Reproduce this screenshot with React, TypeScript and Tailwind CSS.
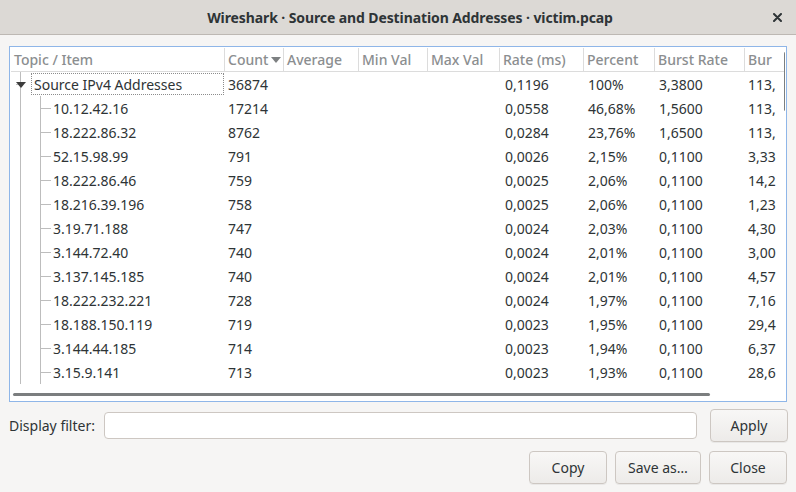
import React from "react";

const cols = [214, 59, 75, 69, 72, 84, 71, 90];
const headers = ["Topic / Item", "Count", "Average", "Min Val", "Max Val", "Rate (ms)", "Percent", "Burst Rate"];

const rows: string[][] = [
  ["Source IPv4 Addresses", "36874", "0,1196", "100%", "3,3800", "113,"],
  ["10.12.42.16", "17214", "0,0558", "46,68%", "1,5600", "113,"],
  ["18.222.86.32", "8762", "0,0284", "23,76%", "1,6500", "113,"],
  ["52.15.98.99", "791", "0,0026", "2,15%", "0,1100", "3,33"],
  ["18.222.86.46", "759", "0,0025", "2,06%", "0,1100", "14,2"],
  ["18.216.39.196", "758", "0,0025", "2,06%", "0,1100", "1,23"],
  ["3.19.71.188", "747", "0,0024", "2,03%", "0,1100", "4,30"],
  ["3.144.72.40", "740", "0,0024", "2,01%", "0,1100", "3,00"],
  ["3.137.145.185", "740", "0,0024", "2,01%", "0,1100", "4,57"],
  ["18.222.232.221", "728", "0,0024", "1,97%", "0,1100", "7,16"],
  ["18.188.150.119", "719", "0,0023", "1,95%", "0,1100", "29,4"],
  ["3.144.44.185", "714", "0,0023", "1,94%", "0,1100", "6,37"],
  ["3.15.9.141", "713", "0,0023", "1,93%", "0,1100", "28,6"],
];

function Btn({ label, w }: { label: string; w: string }) {
  return (
    <button
      className={`${w} h-[33px] rounded-[4px] border border-[#cdc7c2] bg-gradient-to-b from-[#f8f7f6] to-[#edebe9] text-[14px] text-[#2e3436] shadow-[0_1px_0_rgba(0,0,0,0.05)]`}
    >
      {label}
    </button>
  );
}

export default function App() {
  return (
    <div
      className="w-[796px] h-[492px] bg-[#f6f5f4] flex flex-col overflow-hidden text-[#2e3436]"
      style={{ fontFamily: '"Noto Sans", "DejaVu Sans", sans-serif' }}
    >
      {/* title bar */}
      <div className="h-[35px] shrink-0 bg-[#dcd9d5] border-b border-[#bdb8b3] flex items-center relative">
        <div className="flex-1 text-center font-bold text-[14px] tracking-[-0.1px] pl-[24px]">
          Wireshark · Source and Destination Addresses · victim.pcap
        </div>
        <div className="absolute right-[14px] top-[13px]">
          <svg width="9" height="9" viewBox="0 0 9 9">
            <path d="M1 1 L8 8 M8 1 L1 8" stroke="#2e3436" strokeWidth="2" strokeLinecap="round" />
          </svg>
        </div>
      </div>

      <div className="flex-1 flex flex-col px-[9px] pt-[11px]">
        {/* table frame */}
        <div className="h-[356px] border border-[#8fb6e8] p-[1px] bg-white">
          <div className="relative w-full h-full bg-white overflow-hidden text-[14px]">
            {/* header */}
            <div className="flex h-[24px] border-b border-[#dcdcdc] text-[#8b8e90] font-medium">
              {headers.map((h, i) => (
                <div
                  key={h}
                  style={{ width: cols[i] }}
                  className="shrink-0 flex items-center whitespace-nowrap overflow-hidden pl-[3px] border-r border-[#dcdcdc]"
                >
                  {h}
                  {i === 1 && (
                    <svg className="ml-[3px]" width="10" height="6" viewBox="0 0 10 6">
                      <path d="M0 0 L10 0 L5 6 Z" fill="#7d8082" />
                    </svg>
                  )}
                </div>
              ))}
              <div className="shrink-0 flex items-center pl-[3px] whitespace-nowrap">Bur</div>
            </div>
            {/* rows */}
            {rows.map((r, idx) => (
              <div key={idx} className="flex h-[24px] items-center text-[#2e3436]">
                <div style={{ width: cols[0] }} className="shrink-0 h-full relative">
                  <span className="absolute left-[9px] top-0 bottom-0 w-px bg-[#bdbdbd]" />
                  {idx === 0 ? (
                    <>
                      <span className="absolute left-[5px] top-[12px] w-[4px] h-px bg-[#bdbdbd]" />
                      <svg className="absolute left-[5px] top-[10px]" width="10" height="6" viewBox="0 0 10 6">
                        <path d="M0 0 L10 0 L5 6 Z" fill="#3c3c3c" />
                      </svg>
                      <div className="absolute left-[20px] right-[1px] top-[1px] bottom-[1px] border border-dotted border-[#8c8c8c] flex items-center pl-[2px] whitespace-nowrap">
                        {r[0]}
                      </div>
                    </>
                  ) : (
                    <>
                      <span className="absolute left-[29px] top-0 bottom-0 w-px bg-[#bdbdbd]" />
                      <span className="absolute left-[29px] top-[12px] w-[11px] h-px bg-[#bdbdbd]" />
                      <div className="absolute left-[42px] top-0 bottom-0 flex items-center whitespace-nowrap">
                        {r[0]}
                      </div>
                    </>
                  )}
                </div>
                <div style={{ width: cols[1] }} className="shrink-0 pl-[3px]">{r[1]}</div>
                <div style={{ width: cols[2] }} className="shrink-0" />
                <div style={{ width: cols[3] }} className="shrink-0" />
                <div style={{ width: cols[4] }} className="shrink-0" />
                <div style={{ width: cols[5] }} className="shrink-0 pl-[5px]">{r[2]}</div>
                <div style={{ width: cols[6] }} className="shrink-0 pl-[4px]">{r[3]}</div>
                <div style={{ width: cols[7] }} className="shrink-0 pl-[4px]">{r[4]}</div>
                <div className="shrink-0 pl-[3px] whitespace-nowrap">{r[5]}</div>
              </div>
            ))}
            {/* scrollbars */}
            <div className="absolute left-[2px] top-[345px] w-[697px] h-[3px] rounded-full bg-[#7b7e7f]" />
            <div className="absolute left-[773px] top-[4px] w-[3px] h-[59px] rounded-full bg-[#7b7e7f]" />
          </div>
        </div>

        {/* filter row */}
        <div className="flex items-center mt-[7px] h-[33px]">
          <span className="text-[14px] w-[95px] shrink-0 whitespace-nowrap">Display filter:</span>
          <div className="w-[593px] h-[27px] rounded-[4px] border border-[#cdc7c2] bg-white shrink-0" />
          <div className="ml-[13px]">
            <Btn label="Apply" w="w-[78px]" />
          </div>
        </div>

        {/* buttons */}
        <div className="flex justify-end gap-[8px] mt-[9px]">
          <Btn label="Copy" w="w-[78px]" />
          <Btn label="Save as…" w="w-[86px]" />
          <Btn label="Close" w="w-[78px]" />
        </div>
      </div>
    </div>
  );
}
